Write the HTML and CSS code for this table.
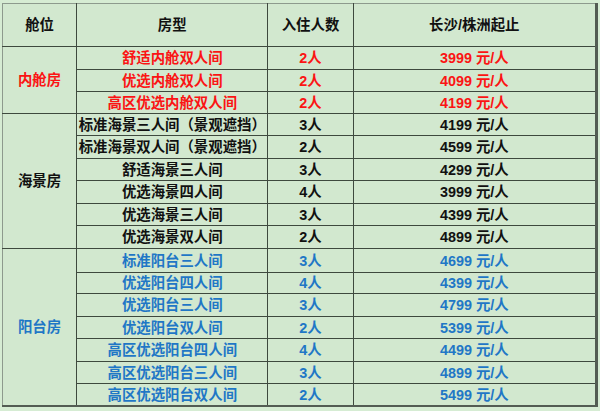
FILE: index.html
```html
<!DOCTYPE html>
<html lang="zh">
<head>
<meta charset="utf-8">
<link rel="stylesheet" href="styles.css">
</head>
<body>
<table class="fare">
  <colgroup>
    <col class="c1"><col class="c2"><col class="c3"><col class="c4">
  </colgroup>
  <thead>
    <tr class="head">
      <th>舱位</th><th>房型</th><th>入住人数</th><th>长沙/株洲起止</th>
    </tr>
  </thead>
  <tbody>
    <tr class="p23 red"><td rowspan="3" class="cat">内舱房</td><td>舒适内舱双人间</td><td>2人</td><td>3999 元/人</td></tr>
    <tr class="p22 red"><td>优选内舱双人间</td><td>2人</td><td>4099 元/人</td></tr>
    <tr class="p22 red"><td>高区优选内舱双人间</td><td>2人</td><td>4199 元/人</td></tr>

    <tr class="p22"><td rowspan="6" class="cat">海景房</td><td>标准海景三人间（景观遮挡）</td><td>3人</td><td>4199 元/人</td></tr>
    <tr class="p23"><td>标准海景双人间（景观遮挡）</td><td>2人</td><td>4599 元/人</td></tr>
    <tr class="p22"><td>舒适海景三人间</td><td>3人</td><td>4299 元/人</td></tr>
    <tr class="p23"><td>优选海景四人间</td><td>4人</td><td>3999 元/人</td></tr>
    <tr class="p22"><td>优选海景三人间</td><td>3人</td><td>4399 元/人</td></tr>
    <tr class="p23"><td>优选海景双人间</td><td>2人</td><td>4899 元/人</td></tr>

    <tr class="p24 blue"><td rowspan="7" class="cat">阳台房</td><td>标准阳台三人间</td><td>3人</td><td>4699 元/人</td></tr>
    <tr class="p21 blue"><td>优选阳台四人间</td><td>4人</td><td>4399 元/人</td></tr>
    <tr class="p23 blue"><td>优选阳台三人间</td><td>3人</td><td>4799 元/人</td></tr>
    <tr class="p22 blue"><td>优选阳台双人间</td><td>2人</td><td>5399 元/人</td></tr>
    <tr class="p23 blue"><td>高区优选阳台四人间</td><td>4人</td><td>4499 元/人</td></tr>
    <tr class="p22 blue"><td>高区优选阳台三人间</td><td>3人</td><td>4899 元/人</td></tr>
    <tr class="p22 blue"><td>高区优选阳台双人间</td><td>2人</td><td>5499 元/人</td></tr>
  </tbody>
</table>
</body>
</html>
```

FILE: styles.css
```css
html, body {
  margin: 0;
  padding: 0;
  background: #d6ecd3;
}
body {
  padding: 3px 0 0 2px;
  font-family: "Liberation Sans", "Noto Sans CJK SC", sans-serif;
  font-weight: bold;
  font-size: 14.4px;
  color: #111;
}
.fare {
  border-collapse: collapse;
  table-layout: fixed;
  width: 596px;
  background: #d2e8cf;
  border-top: 1px solid #8d9a8d;
  border-left: 1px solid #8d9a8d;
  border-right: 3px solid #535c53;
  border-bottom: 2px solid #535c53;
}
.c1 { width: 74px; }
.c2 { width: 191px; }
.c3 { width: 85px; }
.c4 { width: 243px; }
.fare th, .fare td {
  border: 1px solid #3e493e;
  padding: 0;
  text-align: center;
  vertical-align: middle;
  line-height: 16px;
  white-space: nowrap;
  overflow: hidden;
}
.fare thead th {
  height: 42px;
  font-weight: bold;
  border-top: none;
}
.fare th:first-child, .fare td.cat { border-left: none; }
.fare th:last-child, .fare td:last-child { border-right: none; }
tbody td { padding-top: 1px; }
.p21 td { height: 20px; }
.p22 td { height: 21px; }
.p23 td { height: 22px; }
.p24 td { height: 23px; }
.fare td.cat { height: auto; padding-top: 0; }
.red td { color: #fb1414; }
.blue td { color: #1f77c6; }
```
